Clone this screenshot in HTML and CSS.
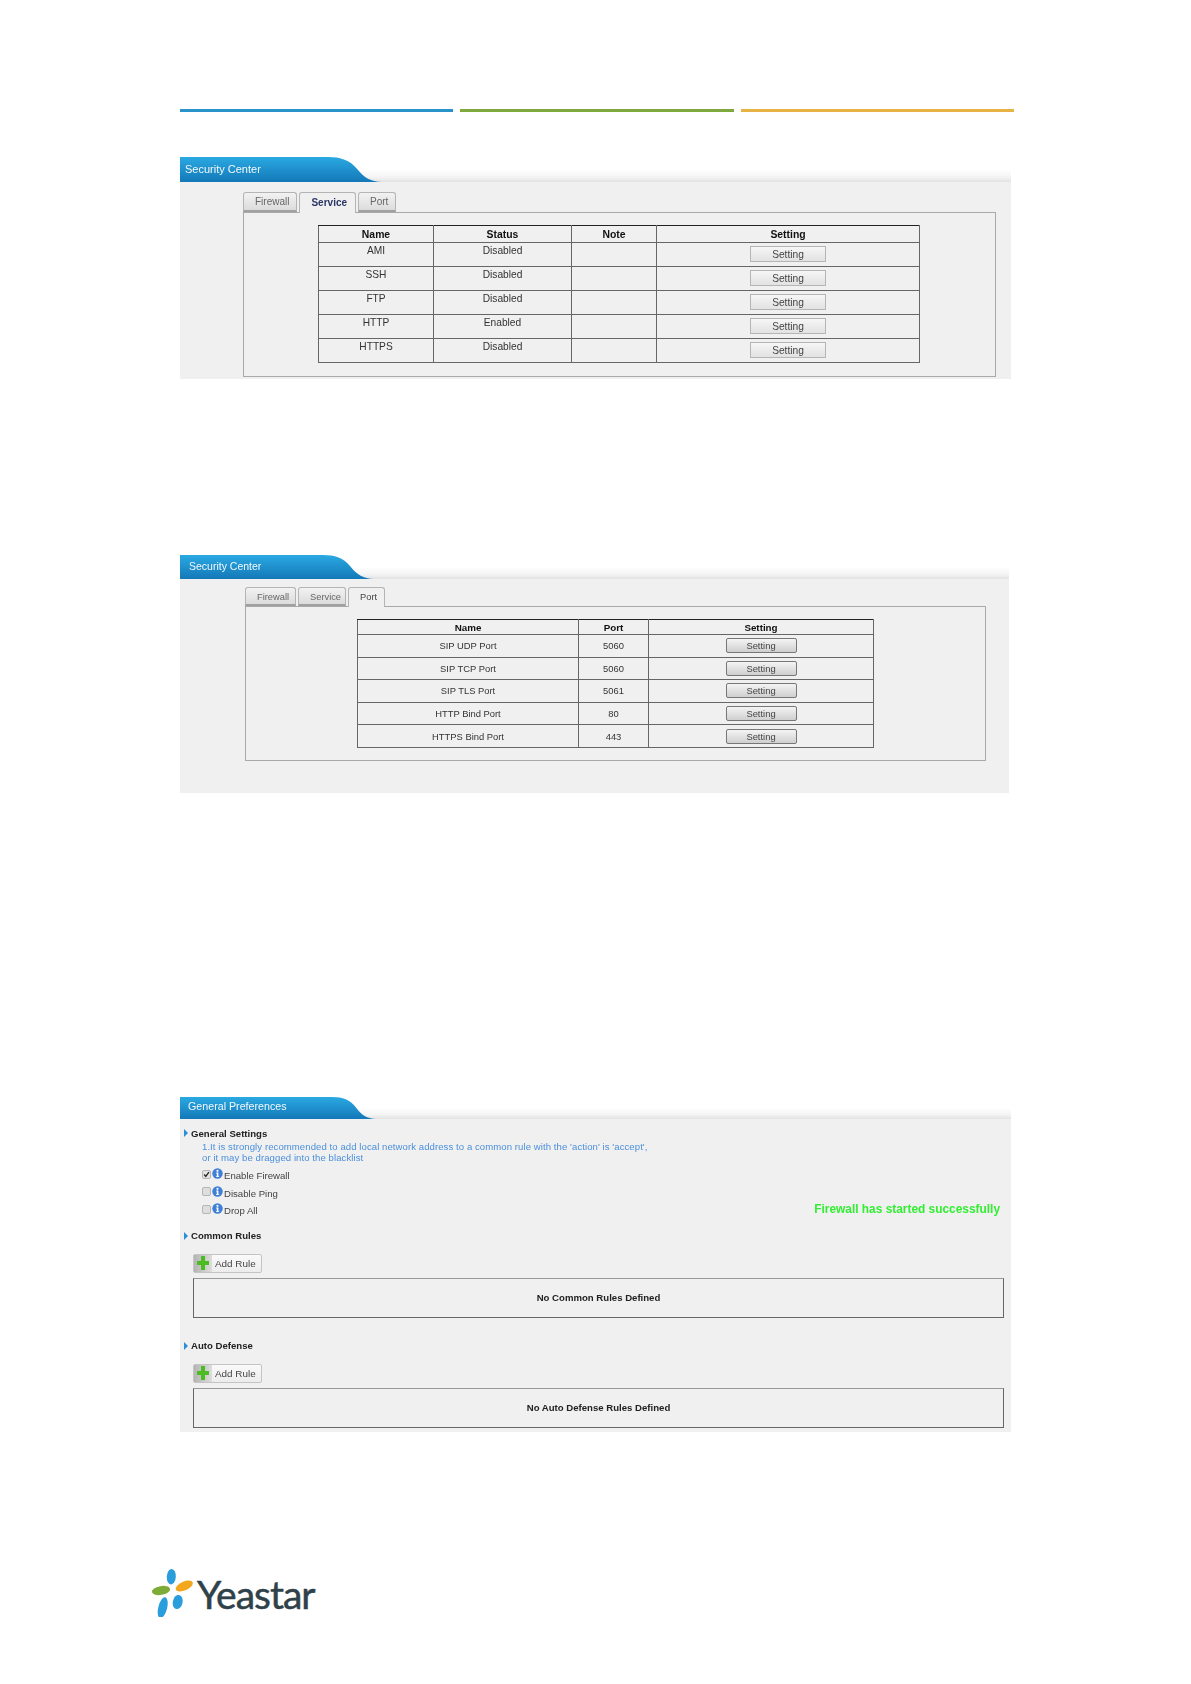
FILE: index.html
```html
<!DOCTYPE html>
<html lang="en">
<head>
<meta charset="utf-8">
<title>Security Center</title>
<link rel="stylesheet" href="styles.css">
</head>
<body>
<svg class="defs" width="0" height="0" aria-hidden="true">
  <defs>
    <linearGradient id="headBlue" x1="0" y1="0" x2="0" y2="1">
      <stop offset="0" stop-color="#2aa9e2"/>
      <stop offset="1" stop-color="#1478b8"/>
    </linearGradient>
    <symbol id="curve" viewBox="0 0 55 25" preserveAspectRatio="none">
      <path d="M0 0H3C15 0 24 3 31 12C38 21 44 24.5 55 25H0Z" fill="url(#headBlue)"/>
    </symbol>
    <symbol id="info" viewBox="0 0 11 11">
      <circle cx="5.5" cy="5.5" r="5.2" fill="#3f7fd8"/>
      <circle cx="5.5" cy="2.8" r="1.1" fill="#fff"/>
      <path d="M4.2 4.6H6.4V8.2H7.2V9H4V8.2H4.8V5.4H4.2Z" fill="#fff"/>
    </symbol>
    <symbol id="plus" viewBox="0 0 12 14">
      <path d="M4 0H8V5H12V9H8V14H4V9H0V5H4Z" fill="#4dbb24"/>
    </symbol>
  </defs>
</svg>
<main class="page">
  <div class="rules">
    <span class="rule rule--blue"></span>
    <span class="rule rule--green"></span>
    <span class="rule rule--orange"></span>
  </div>

  <section class="panel panel--service">
    <header class="head">
      <h2 class="head-title">Security Center</h2>
      <svg class="head-curve"><use href="#curve"/></svg>
    </header>
    <div class="tabs-body">
      <div class="tabs">
        <span class="tab">Firewall</span>
        <span class="tab tab--active tab--bold">Service</span>
        <span class="tab">Port</span>
      </div>
      <div class="tab-box">
        <table class="grid">
          <colgroup><col class="c-s1"><col class="c-s2"><col class="c-s3"><col></colgroup>
          <thead>
            <tr><th>Name</th><th>Status</th><th>Note</th><th>Setting</th></tr>
          </thead>
          <tbody>
            <tr><td>AMI</td><td>Disabled</td><td></td><td class="cell-btn"><button class="btn">Setting</button></td></tr>
            <tr><td>SSH</td><td>Disabled</td><td></td><td class="cell-btn"><button class="btn">Setting</button></td></tr>
            <tr><td>FTP</td><td>Disabled</td><td></td><td class="cell-btn"><button class="btn">Setting</button></td></tr>
            <tr><td>HTTP</td><td>Enabled</td><td></td><td class="cell-btn"><button class="btn">Setting</button></td></tr>
            <tr><td>HTTPS</td><td>Disabled</td><td></td><td class="cell-btn"><button class="btn">Setting</button></td></tr>
          </tbody>
        </table>
      </div>
    </div>
  </section>

  <section class="panel panel--port">
    <header class="head">
      <h2 class="head-title">Security Center</h2>
      <svg class="head-curve"><use href="#curve"/></svg>
    </header>
    <div class="tabs-body">
      <div class="tabs">
        <span class="tab">Firewall</span>
        <span class="tab">Service</span>
        <span class="tab tab--active">Port</span>
      </div>
      <div class="tab-box">
        <table class="grid">
          <colgroup><col class="c-p1"><col class="c-p2"><col></colgroup>
          <thead>
            <tr><th>Name</th><th>Port</th><th>Setting</th></tr>
          </thead>
          <tbody>
            <tr><td>SIP UDP Port</td><td>5060</td><td class="cell-btn"><button class="btn">Setting</button></td></tr>
            <tr><td>SIP TCP Port</td><td>5060</td><td class="cell-btn"><button class="btn">Setting</button></td></tr>
            <tr><td>SIP TLS Port</td><td>5061</td><td class="cell-btn"><button class="btn">Setting</button></td></tr>
            <tr><td>HTTP Bind Port</td><td>80</td><td class="cell-btn"><button class="btn">Setting</button></td></tr>
            <tr><td>HTTPS Bind Port</td><td>443</td><td class="cell-btn"><button class="btn">Setting</button></td></tr>
          </tbody>
        </table>
      </div>
    </div>
  </section>

  <section class="panel panel--prefs">
    <header class="head">
      <h2 class="head-title">General Preferences</h2>
      <svg class="head-curve"><use href="#curve"/></svg>
    </header>
    <div class="prefs-body">
      <h3 class="sec-title sec-title--first">General Settings</h3>
      <p class="note">1.It is strongly recommended to add local network address to a common rule with the 'action' is 'accept',<br>or it may be dragged into the blacklist</p>
      <div class="opts-row">
        <div class="opts">
          <div class="opt">
            <span class="check check--on"><svg viewBox="0 0 9 9" class="tick"><path d="M1.5 4.5L3.6 7L7.6 1.6" fill="none" stroke="#222" stroke-width="1.6"/></svg></span>
            <svg class="info"><use href="#info"/></svg>
            <span>Enable Firewall</span>
          </div>
          <div class="opt">
            <span class="check"></span>
            <svg class="info"><use href="#info"/></svg>
            <span>Disable Ping</span>
          </div>
          <div class="opt">
            <span class="check"></span>
            <svg class="info"><use href="#info"/></svg>
            <span>Drop All</span>
          </div>
        </div>
        <strong class="fw-msg">Firewall has started successfully</strong>
      </div>

      <h3 class="sec-title sec-title--common">Common Rules</h3>
      <button class="add-rule"><span class="add-icon"><svg class="plus"><use href="#plus"/></svg></span><span class="add-label">Add Rule</span></button>
      <div class="empty">No Common Rules Defined</div>

      <h3 class="sec-title sec-title--auto">Auto Defense</h3>
      <button class="add-rule"><span class="add-icon"><svg class="plus"><use href="#plus"/></svg></span><span class="add-label">Add Rule</span></button>
      <div class="empty">No Auto Defense Rules Defined</div>
    </div>
  </section>

  <footer class="logo">
    <svg class="logo-mark" viewBox="0 0 50 52" aria-hidden="true">
      <ellipse cx="21.3" cy="11.7" rx="4.5" ry="7.8" transform="rotate(3 21.3 11.7)" fill="#2a9ddc"/>
      <ellipse cx="34.3" cy="21" rx="9.2" ry="4.4" transform="rotate(-24 34.3 21)" fill="#f2a71e"/>
      <ellipse cx="11" cy="25.5" rx="9.2" ry="4.4" transform="rotate(-10 11 25.5)" fill="#7cab38"/>
      <ellipse cx="12.7" cy="42.7" rx="4.4" ry="10.8" transform="rotate(14 12.7 42.7)" fill="#2a9ddc"/>
      <ellipse cx="27.7" cy="37" rx="4.9" ry="7.2" transform="rotate(12 27.7 37)" fill="#2a9ddc"/>
    </svg>
    <span class="logo-text">Yeastar</span>
  </footer>
</main>
</body>
</html>
```
FILE: styles.css
```css
* { box-sizing: border-box; }

html, body { margin: 0; background: #fff; }

body {
  font-family: "Liberation Sans", Arial, sans-serif;
  color: #222;
  font-size: 10px;
}

.defs { display: block; height: 0; }

.page {
  width: 1191px;
  height: 1684px;
  padding: 109px 0 0 180px;
  overflow: hidden;
}

/* coloured rules */
.rules { display: flex; gap: 7px; width: 834px; height: 3px; }
.rule { flex: 1; }
.rule--blue { background: #2a93c9; }
.rule--green { background: #7fa83f; }
.rule--orange { background: #e8b345; }

/* panels */
.panel { background: #f0f0f0; filter: blur(.4px); }
.panel--service { width: 831px; height: 222px; margin-top: 45px; }
.panel--port { width: 829px; height: 238px; margin-top: 176px; }
.panel--prefs { width: 831px; height: 335px; margin-top: 304px; }

.head {
  display: flex;
  height: 25px;
  background: linear-gradient(to bottom, #fff 50%, #f4f4f4 80%, #e2e2e2 100%);
}
.panel--port .head { height: 24px; }
.panel--prefs .head { height: 22px; }

.head-title {
  margin: 0;
  display: flex;
  align-items: center;
  width: 145px;
  padding: 0 0 2px 5px;
  background: linear-gradient(to bottom, #2aa9e2, #1478b8);
  color: #f2f9fd;
  font-size: 11px;
  font-weight: 400;
}
.panel--port .head-title { width: 140px; padding-left: 9px; font-size: 10.5px; }
.panel--prefs .head-title { width: 150px; padding: 0 0 4px 8px; font-size: 10.7px; }

.head-curve { display: block; width: 57px; height: 100%; }
.panel--port .head-curve { width: 54px; }
.panel--prefs .head-curve { width: 46px; }

/* tabs */
.tabs-body { padding: 10px 15px 0 63px; }
.panel--port .tabs-body { padding: 8px 23px 0 65px; }

.tabs { display: flex; gap: 2px; align-items: flex-start; height: 20px; }
.panel--port .tabs { height: 19px; }

.tab {
  display: flex;
  align-items: center;
  height: 20px;
  padding: 0 7px 0 11px;
  border: 1px solid #b4b4b4;
  border-bottom: 2px solid #a0a0a0;
  border-radius: 3px 3px 0 0;
  background: linear-gradient(to bottom, #f2f2f2, #dcdcdc);
  color: #666;
}
.panel--port .tab { height: 19px; padding: 1px 4px 0 11px; font-size: 9.3px; }
.panel--port .tab:first-child { padding-right: 6px; }

.tab--active {
  position: relative;
  height: 21px;
  padding: 0 8px 2px 11px;
  border-bottom: 0;
  background: #f0f0f0;
  color: #444;
}
.panel--port .tab.tab--active { height: 20px; padding: 0 7px 1px 11px; }
.tab--bold { font-weight: 700; color: #2b3566; }

.tab-box { border: 1px solid #a9a9a9; }
.panel--service .tab-box { height: 165px; padding: 12px 0 0 74px; }
.panel--port .tab-box { height: 155px; padding: 12px 0 0 111px; }

/* tables */
.grid {
  border-collapse: collapse;
  table-layout: fixed;
  border: 1px solid #222;
  color: #333;
}
.panel--service .grid { width: 602px; font-size: 10.2px; }
.panel--port .grid { width: 517px; font-size: 9.4px; }

.c-s1 { width: 115px; }
.c-s2 { width: 138px; }
.c-s3 { width: 85px; }
.c-p1 { width: 221px; }
.c-p2 { width: 70px; }

.grid th, .grid td {
  padding: 0;
  text-align: center;
  border: 1px solid #666;
}
.grid th + th, .grid td + td { border-left-color: #aaa; }
.grid th {
  color: #111;
  border-top: 1px solid #222;
}
.panel--service .grid th { height: 17px; font-size: 10.4px; }
.panel--port .grid th { height: 15px; font-size: 9.8px; }

.panel--service .grid td { height: 24px; vertical-align: top; padding-top: 2px; }
.panel--port .grid td { height: 22.6px; vertical-align: middle; }
.panel--service .grid td.cell-btn { vertical-align: middle; padding: 0 0 1px; }

.btn {
  display: block;
  margin: 0 auto;
  padding: 0;
  font-family: inherit;
  font-size: 10.2px;
  color: #444;
  border: 1px solid #b5b5b5;
  background: linear-gradient(to bottom, #f6f6f6, #e2e2e2);
}
.panel--service .btn { width: 76px; height: 16px; }
.panel--port .btn {
  width: 71px;
  height: 15px;
  font-size: 9.4px;
  border-color: #777;
  border-radius: 2px;
  background: linear-gradient(to bottom, #f4f4f4, #cfcfcf);
}

/* general preferences */
.prefs-body { padding: 7px 0 0 4px; }

.sec-title {
  display: flex;
  align-items: center;
  height: 14px;
  margin: 0;
  font-size: 9.6px;
  font-weight: 700;
  color: #222;
}
.sec-title::before {
  content: "";
  width: 0;
  height: 0;
  margin-right: 3px;
  border-left: 4px solid #2a8fd8;
  border-top: 4px solid transparent;
  border-bottom: 4px solid transparent;
}
.sec-title--common { margin-top: 9px; }
.sec-title--auto { margin-top: 21px; }

.note {
  margin: 1px 0 0 18px;
  font-size: 9.55px;
  line-height: 11px;
  letter-spacing: .08px;
  color: #4a8fdc;
}

.opts-row {
  display: flex;
  justify-content: space-between;
  align-items: flex-end;
  margin-top: 4px;
  padding: 0 11px 0 18px;
}
.opt {
  display: flex;
  align-items: center;
  height: 17.5px;
  font-size: 9.6px;
  color: #444;
}
.check {
  display: block;
  width: 9px;
  height: 9px;
  margin-top: -3px;
  border: 1px solid #b5b5b5;
  border-radius: 2px;
  background: #dedede;
}
.check--on { background: #e4e4e4; }
.tick { display: block; width: 7px; height: 7px; }
.info { display: block; width: 11px; height: 11px; margin: -4px 1px 0 1px; }

.fw-msg {
  margin-bottom: 4px;
  font-size: 11.9px;
  color: #33ee33;
}

.add-rule {
  display: flex;
  width: 69px;
  height: 19px;
  margin: 11px 0 0 9px;
  padding: 0;
  font-family: inherit;
  border: 1px solid #c4c4c4;
  border-radius: 2px;
  background: linear-gradient(to bottom, #fafafa, #ececec);
}
.add-icon {
  display: flex;
  align-items: center;
  justify-content: center;
  width: 18px;
  height: 100%;
  background: linear-gradient(to right, #b4b4b4, #dddddd);
}
.plus { display: block; width: 12px; height: 14px; }
.add-label {
  align-self: center;
  padding-left: 3px;
  font-size: 9.9px;
  color: #444;
}

.empty {
  display: flex;
  align-items: center;
  justify-content: center;
  width: 811px;
  height: 40px;
  margin: 5px 0 0 9px;
  border: 1px solid #666;
  border-top-color: #999;
  font-size: 9.6px;
  font-weight: 700;
  color: #222;
}

/* logo */
.logo {
  display: flex;
  align-items: flex-start;
  margin: 133px 0 0 -30px;
}
.logo-mark { display: block; width: 50px; height: 52px; }
.logo-text {
  margin: 7px 0 0 -3px;
  font-family: Lato, "Open Sans", sans-serif;
  font-size: 39px;
  line-height: 45px;
  letter-spacing: -1px;
  color: #2f4149;
  -webkit-text-stroke: .5px #2f4149;
}
```
